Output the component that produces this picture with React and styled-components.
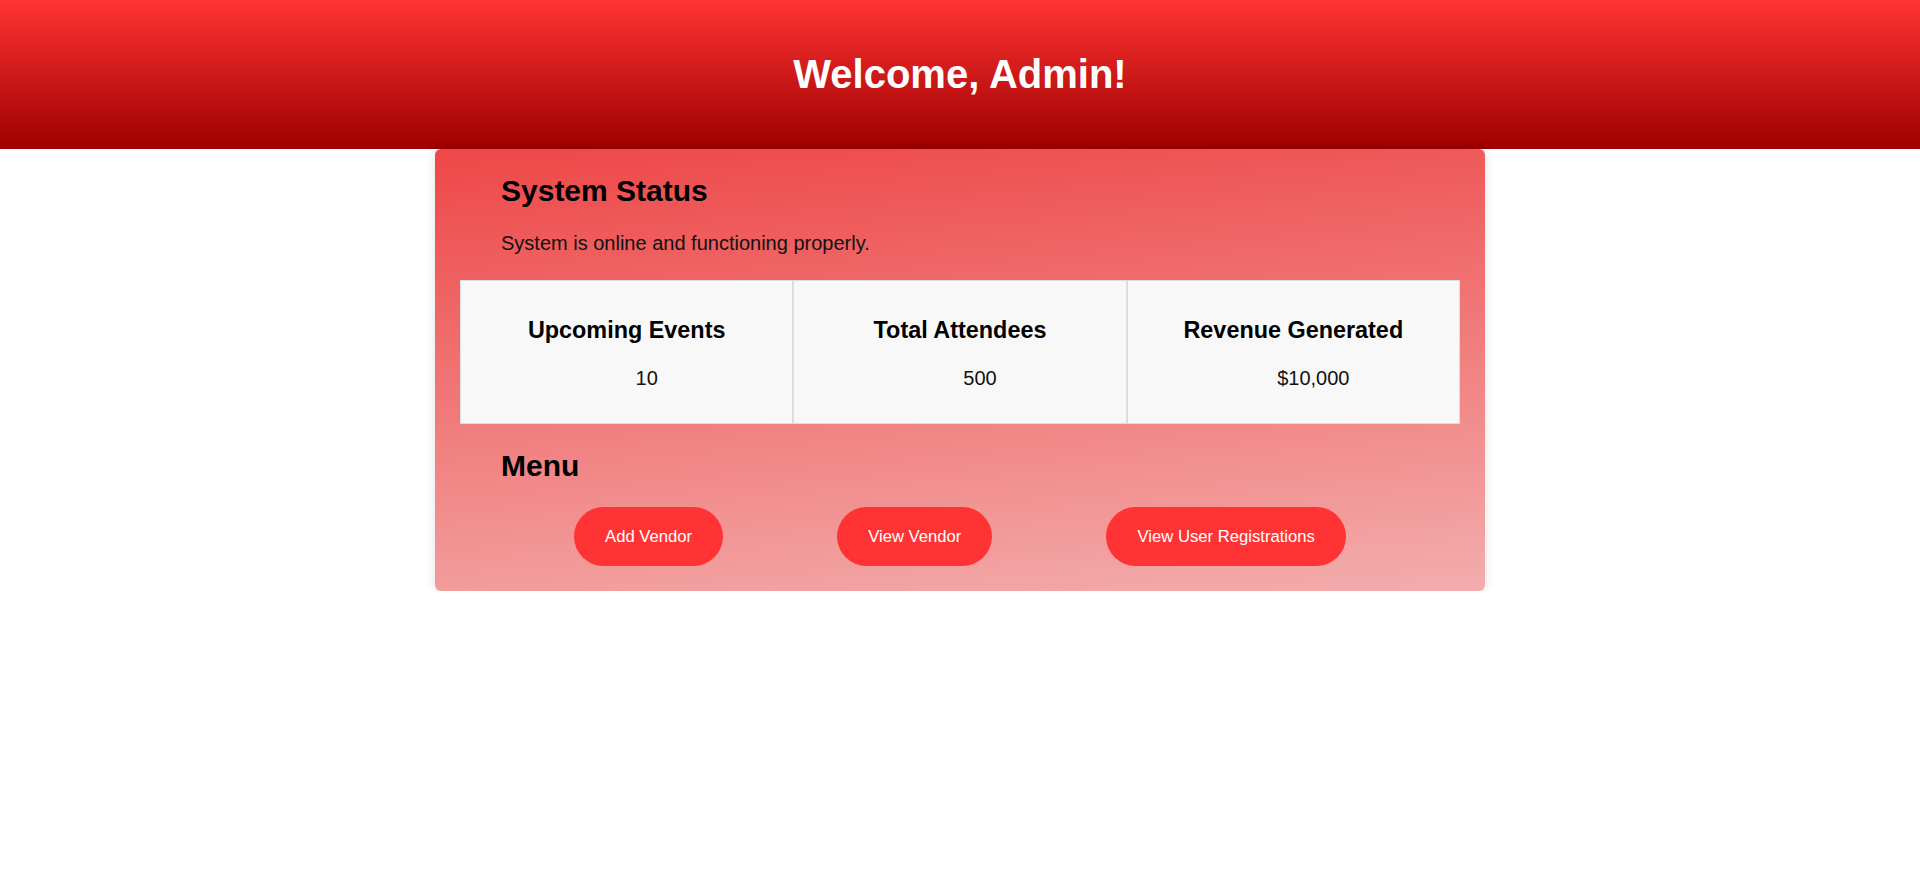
import React from "react";
import styled, { createGlobalStyle } from "styled-components";

const GlobalStyle = createGlobalStyle`
  body {
    margin: 0;
    background: #ffffff;
    font-family: "Liberation Sans", Arial, sans-serif;
  }
`;

const Header = styled.header`
  background: linear-gradient(to bottom, #ff3333, #9e0000);
  padding: 25px;
  text-align: center;
`;

const Title = styled.h1`
  margin: 27px 0;
  color: #ffffff;
  font-size: 40px;
  font-weight: bold;
`;

const Card = styled.main`
  width: 1050px;
  box-sizing: border-box;
  margin: 0 auto;
  padding: 0 25px 25px;
  border-radius: 6px;
  background: linear-gradient(175deg, #ee4747, #f3adad);
  box-shadow: 0 0 12px rgba(0, 0, 0, 0.12);
`;

const Section = styled.section`
  padding-left: 41px;
`;

const Heading = styled.h2`
  margin: 0;
  padding-top: 24.5px;
  margin-bottom: 24.5px;
  font-size: 30px;
  font-weight: bold;
  color: #000000;
`;

const Text = styled.p`
  margin: 0;
  font-size: 20px;
  color: #111111;
`;

const Stats = styled.div`
  display: grid;
  grid-template-columns: repeat(3, 1fr);
  margin: 25px 0;
`;

const Stat = styled.div`
  background: #f8f8f8;
  border: 1px solid #dddddd;
  padding: 12.5px;
  text-align: center;
`;

const StatLabel = styled.h3`
  margin: 23.4px 0;
  font-size: 23.4px;
  font-weight: bold;
  color: #000000;
`;

const StatValue = styled.p`
  margin: 23.4px 0 20px;
  padding-left: 40px;
  font-size: 20px;
  color: #111111;
`;

const MenuHeading = styled(Heading)`
  padding-top: 0;
  margin-top: 0;
`;

const Buttons = styled.div`
  display: flex;
  justify-content: space-evenly;
`;

const Button = styled.button`
  border: none;
  border-radius: 30px;
  padding: 19.5px 31px;
  background: #ff3333;
  color: #ffffff;
  font-family: "Liberation Sans", Arial, sans-serif;
  font-size: 16.67px;
  cursor: pointer;
`;

const stats = [
  { label: "Upcoming Events", value: "10" },
  { label: "Total Attendees", value: "500" },
  { label: "Revenue Generated", value: "$10,000" },
];

const actions = ["Add Vendor", "View Vendor", "View User Registrations"];

const App = () => {
  return (
    <>
      <GlobalStyle />
      <Header>
        <Title>Welcome, Admin!</Title>
      </Header>
      <Card>
        <Section>
          <Heading>System Status</Heading>
          <Text>System is online and functioning properly.</Text>
        </Section>
        <Stats>
          {stats.map(stat => (
            <Stat key={stat.label}>
              <StatLabel>{stat.label}</StatLabel>
              <StatValue>{stat.value}</StatValue>
            </Stat>
          ))}
        </Stats>
        <Section>
          <MenuHeading>Menu</MenuHeading>
        </Section>
        <Buttons>
          {actions.map(action => (
            <Button key={action}>{action}</Button>
          ))}
        </Buttons>
      </Card>
    </>
  );
};

export default App;
